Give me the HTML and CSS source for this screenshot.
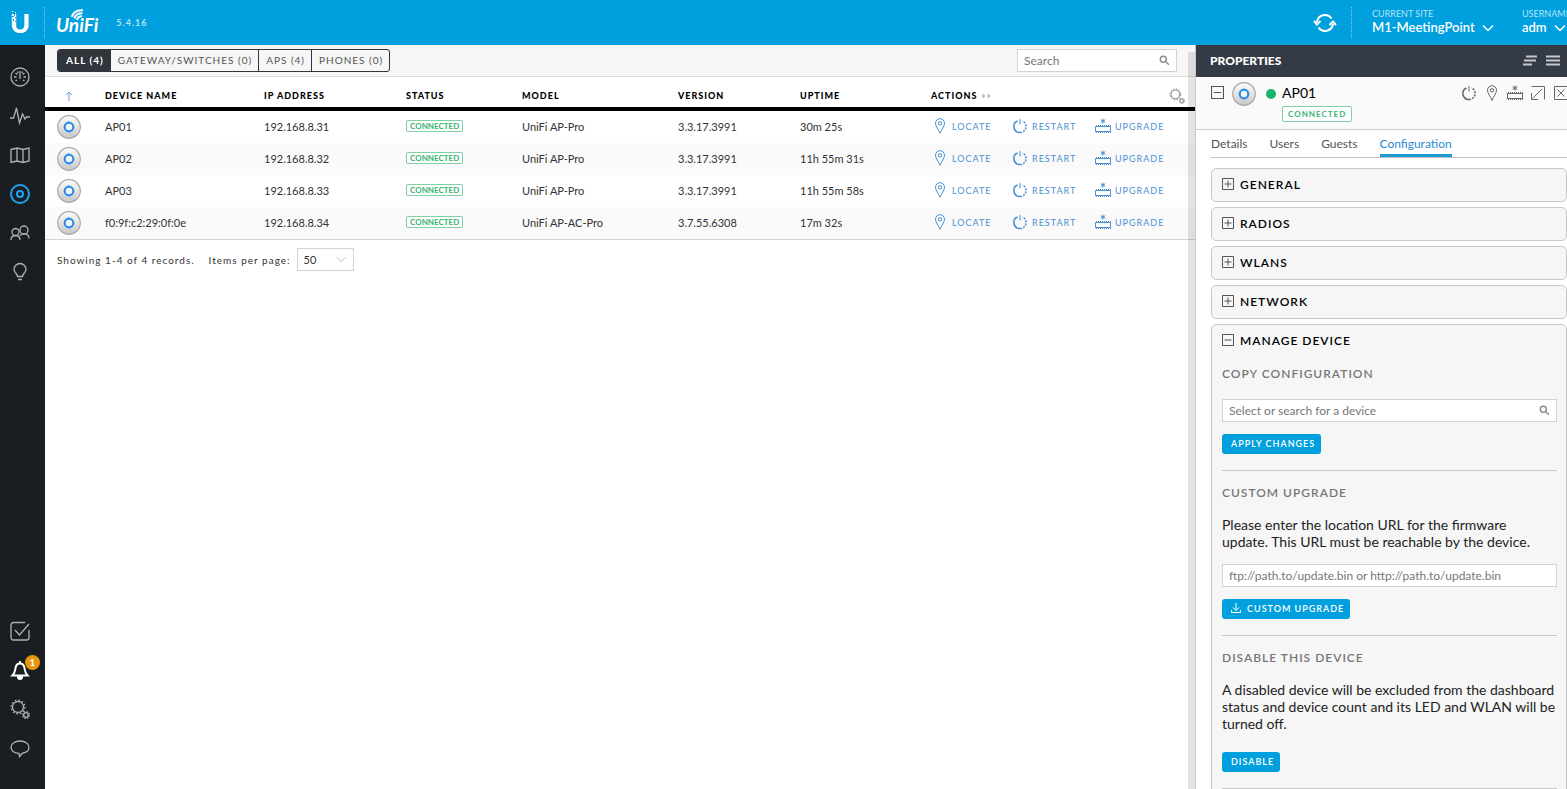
FILE: index.html
```html
<!DOCTYPE html>
<html lang="en">
<head>
    <meta charset="UTF-8">
    <meta name="viewport" content="width=device-width, initial-scale=1.0">
    <title>UniFi - Devices</title>
    <link rel="stylesheet" href="styles.css">
</head>
<body>
    <!-- icon sprite -->
    <svg class="sprite" aria-hidden="true">
        <linearGradient id="ap-shade" x1="0" y1="0" x2="0" y2="1">
            <stop offset="0" stop-color="#fdfdfd"/>
            <stop offset="1" stop-color="#c6c6c6"/>
        </linearGradient>
        <symbol id="i-ap" viewBox="0 0 24 24">
            <circle cx="12" cy="12" r="11.3" fill="url(#ap-shade)" stroke="#a9a9a9" stroke-width="1.2"/>
            <circle cx="12" cy="12" r="4.3" fill="#f4f4f4" stroke="#2b90e6" stroke-width="2.2"/>
        </symbol>
        <symbol id="i-pin" viewBox="0 0 16 16">
            <path d="M8 15.3C6.500 11.500 3.500 8.500 3.500 5.200a4.500 4.500 0 0 1 9 0C12.500 8.500 9.500 11.500 8 15.300z"/>
            <circle cx="8" cy="5.300" r="1.700"/>
        </symbol>
        <symbol id="i-restart" viewBox="0 0 16 16">
            <path d="M8 1v5.500"/>
            <path d="M5.500 3A6 6 0 0 0 8 14.500" stroke-width="1.500"/>
            <path d="M8 14.500A6 6 0 0 0 10.500 3" stroke-width="1.500" stroke-dasharray="2 1.200"/>
        </symbol>
        <symbol id="i-upgrade" viewBox="0 0 16 16">
            <path d="M8 .5v5M5.700 1.700l4.600 2.800M10.300 1.700L5.700 4.500"/>
            <path d="M.5 8.500h15v5H.5z"/>
            <path d="M1 14.500h15M1 7.500h15" stroke-dasharray="1 1"/>
        </symbol>
        <symbol id="i-gears" viewBox="0 0 20 20">
            <circle cx="8" cy="8" r="5.500"/>
            <circle cx="8" cy="8" r="6.800" stroke-dasharray="1.700 1.860"/>
            <circle cx="16" cy="16" r="2.300"/>
            <circle cx="16" cy="16" r="3.400" stroke-dasharray="1.300 1.370"/>
        </symbol>
        <symbol id="i-search" viewBox="0 0 12 12">
            <circle cx="4.700" cy="4.700" r="3.300"/>
            <path d="M7.200 7.200l3.600 3.400"/>
        </symbol>
        <symbol id="i-down" viewBox="0 0 12 8">
            <path d="M1 1.500l5 5 5-5"/>
        </symbol>
        <symbol id="i-plus" viewBox="0 0 12 12">
            <path d="M.5.5h11v11H.5zM2.500 6h7M6 2.500v7"/>
        </symbol>
        <symbol id="i-minus" viewBox="0 0 12 12">
            <path d="M.5.5h11v11H.5zM2.500 6h7"/>
        </symbol>
    </svg>

    <header class="topbar">
        <a class="brand" href="#" aria-label="Ubiquiti">
            <svg class="brand-mark" width="24" height="26" viewBox="0 0 24 26">
                <text class="brand-letter" x="0" y="23">U</text>
                <g fill="#00a0df">
                    <rect x="4" y="3" width="1" height="3"/>
                    <rect x="2" y="6" width="2" height="1"/>
                    <rect x="5" y="7" width="2" height="1"/>
                    <rect x="3" y="9" width="1" height="2"/>
                    <rect x="5" y="11" width="1" height="1"/>
                </g>
                <g fill="#fff">
                    <rect x="2" y="1" width="1" height="1"/>
                    <rect x="5" y="2" width="1" height="1"/>
                </g>
            </svg>
        </a>
        <a class="logo" href="#">
            <svg class="logo-waves" width="16" height="12" viewBox="0 0 16 12">
                <path d="M1 8C2 3 6 .8 12 1.200M3.500 9.500C4.500 5.500 7 4.200 11.500 4.300M6 11c.6-2.600 2-3.700 5-3.700"/>
            </svg>
            <span class="logo-text">UniFi</span>
        </a>
        <span class="version">5.4.16</span>
        <button class="icon-btn refresh" aria-label="Refresh">
            <svg width="24" height="20" viewBox="0 0 24 20">
                <path d="M4 9a8 8 0 0 1 14.500-3.500M20 11a8 8 0 0 1-14.500 3.500"/>
                <path d="M1 8l3 3.500L7.500 8M16.500 12L20 8.500l3 3.500"/>
            </svg>
        </button>
        <button class="picker site">
            <span class="picker-label">CURRENT SITE</span>
            <span class="picker-value">M1-MeetingPoint <svg class="chevron"><use href="#i-down"/></svg></span>
        </button>
        <button class="picker user">
            <span class="picker-label">USERNAME</span>
            <span class="picker-value">adm <svg class="chevron"><use href="#i-down"/></svg></span>
        </button>
    </header>

    <div class="layout">
        <nav class="sidebar">
            <a href="#" aria-label="Dashboard"><svg viewBox="0 0 20 20"><circle cx="10" cy="10" r="9"/><path d="M10 4v8M4 10h2.500M13.500 10H16M5.500 6l1.800 1.400M14.500 6l-1.800 1.400M5.500 14l1.500-1M14.500 14L13 13M7.500 4.500l.6 1.500M12.500 4.500L12 6"/></svg></a>
            <a href="#" aria-label="Statistics"><svg viewBox="0 0 20 20"><path d="M0 12h3.500L6.500 2l3 15L12.500 8l2.500 5 1.500-2H20"/></svg></a>
            <a href="#" aria-label="Map"><svg viewBox="0 0 20 20"><path d="M1 4.500L7 3l6 1.500L19 3v13l-6 1.500L7 16l-6 1.500zM7 3v13M13 4.500v13"/></svg></a>
            <a href="#" class="active" aria-label="Devices"><svg viewBox="0 0 20 20"><circle cx="10" cy="10" r="9"/><circle cx="10" cy="10" r="3"/></svg></a>
            <a href="#" aria-label="Clients"><svg viewBox="0 0 20 20"><circle cx="5.500" cy="9" r="3.500"/><circle cx="14" cy="7" r="4"/><path d="M1 17c0-3 2-4.500 4.500-4.500S10 14 10 17M10 12.500c1-1.300 2.400-1.600 4-1.600 3 0 5 1.600 5 4.600"/></svg></a>
            <a href="#" aria-label="Insights"><svg viewBox="0 0 20 20"><path d="M7.500 14.500c0-3-3.500-4-3.500-7a6 6 0 0 1 12 0c0 3-3.500 4-3.500 7zM8 17.500h4"/></svg></a>
            <a href="#" class="push" aria-label="Tasks"><svg viewBox="0 0 20 20"><path d="M15 1.500H3.500a2.500 2.500 0 0 0-2.500 2.500v12.500A2.500 2.500 0 0 0 3.500 19h13a2.500 2.500 0 0 0 2.500-2.500V9M5 9l4.500 5L19 3"/></svg></a>
            <a href="#" class="alerts" aria-label="Alerts"><svg viewBox="0 0 20 20"><path d="M2.500 15.500C5 13 5 11 5.500 8c.5-3 2-4.500 4.500-4.500S14 5 14.500 8c.5 3 .5 5 3 7.500zM10 3.500V1"/><path d="M8 17h4a2 2 0 0 1-4 0z" fill="#fff"/></svg><span class="badge">1</span></a>
            <a href="#" aria-label="Settings"><svg viewBox="0 0 20 20"><use href="#i-gears"/></svg></a>
            <a href="#" aria-label="Chat"><svg viewBox="0 0 20 20"><path d="M9 15.300C4.300 15 1 12.500 1 9.200 1 5.700 5 3 10 3s9 2.700 9 6.200c0 3-2.700 5.300-6.500 6L9.500 18.500z"/></svg></a>
        </nav>

        <main class="content">
            <div class="toolbar">
                <div class="filters">
                    <button class="filter active">ALL (4)</button>
                    <button class="filter">GATEWAY/SWITCHES (0)</button>
                    <button class="filter">APS (4)</button>
                    <button class="filter">PHONES (0)</button>
                </div>
                <div class="field search">
                    <input type="text" placeholder="Search" aria-label="Search">
                    <svg class="search-icon"><use href="#i-search"/></svg>
                </div>
            </div>

            <table class="devices">
                <thead>
                    <tr>
                        <th class="col-icon"><svg class="sort" viewBox="0 0 8 10"><path d="M4 10V1M1 4l3-3 3 3"/></svg></th>
                        <th class="col-name">DEVICE NAME</th>
                        <th class="col-ip">IP ADDRESS</th>
                        <th class="col-status">STATUS</th>
                        <th class="col-model">MODEL</th>
                        <th class="col-version">VERSION</th>
                        <th class="col-uptime">UPTIME</th>
                        <th>
                            <div class="actions-head">ACTIONS
                                <svg class="resize" viewBox="0 0 10 6"><path d="M3 1L1 3l2 2M7 1l2 2-2 2M1 3h3M6 3h3"/></svg>
                                <button class="icon-btn columns" aria-label="Customize columns"><svg class="line-icon"><use href="#i-gears"/></svg></button>
                            </div>
                        </th>
                    </tr>
                </thead>
                <tbody>
                    <tr>
                        <td class="icon-cell"><svg class="ap"><use href="#i-ap"/></svg></td>
                        <td>AP01</td>
                        <td>192.168.8.31</td>
                        <td><span class="status">CONNECTED</span></td>
                        <td>UniFi AP-Pro</td>
                        <td>3.3.17.3991</td>
                        <td>30m 25s</td>
                        <td><div class="actions">
                            <button class="action locate"><svg><use href="#i-pin"/></svg>LOCATE</button>
                            <button class="action restart"><svg><use href="#i-restart"/></svg>RESTART</button>
                            <button class="action"><svg><use href="#i-upgrade"/></svg>UPGRADE</button>
                        </div></td>
                    </tr>
                    <tr>
                        <td class="icon-cell"><svg class="ap"><use href="#i-ap"/></svg></td>
                        <td>AP02</td>
                        <td>192.168.8.32</td>
                        <td><span class="status">CONNECTED</span></td>
                        <td>UniFi AP-Pro</td>
                        <td>3.3.17.3991</td>
                        <td>11h 55m 31s</td>
                        <td><div class="actions">
                            <button class="action locate"><svg><use href="#i-pin"/></svg>LOCATE</button>
                            <button class="action restart"><svg><use href="#i-restart"/></svg>RESTART</button>
                            <button class="action"><svg><use href="#i-upgrade"/></svg>UPGRADE</button>
                        </div></td>
                    </tr>
                    <tr>
                        <td class="icon-cell"><svg class="ap"><use href="#i-ap"/></svg></td>
                        <td>AP03</td>
                        <td>192.168.8.33</td>
                        <td><span class="status">CONNECTED</span></td>
                        <td>UniFi AP-Pro</td>
                        <td>3.3.17.3991</td>
                        <td>11h 55m 58s</td>
                        <td><div class="actions">
                            <button class="action locate"><svg><use href="#i-pin"/></svg>LOCATE</button>
                            <button class="action restart"><svg><use href="#i-restart"/></svg>RESTART</button>
                            <button class="action"><svg><use href="#i-upgrade"/></svg>UPGRADE</button>
                        </div></td>
                    </tr>
                    <tr>
                        <td class="icon-cell"><svg class="ap"><use href="#i-ap"/></svg></td>
                        <td>f0:9f:c2:29:0f:0e</td>
                        <td>192.168.8.34</td>
                        <td><span class="status">CONNECTED</span></td>
                        <td>UniFi AP-AC-Pro</td>
                        <td>3.7.55.6308</td>
                        <td>17m 32s</td>
                        <td><div class="actions">
                            <button class="action locate"><svg><use href="#i-pin"/></svg>LOCATE</button>
                            <button class="action restart"><svg><use href="#i-restart"/></svg>RESTART</button>
                            <button class="action"><svg><use href="#i-upgrade"/></svg>UPGRADE</button>
                        </div></td>
                    </tr>
                </tbody>
            </table>

            <div class="pager">
                <span>Showing 1-4 of 4 records.</span>
                <label for="per-page">Items per page:</label>
                <div class="select">
                    <select id="per-page">
                        <option>50</option>
                        <option>100</option>
                    </select>
                    <svg class="select-arrow"><use href="#i-down"/></svg>
                </div>
            </div>
        </main>

        <aside class="panel">
            <div class="panel-title">
                <h2>PROPERTIES</h2>
                <button class="icon-btn" aria-label="Collapse all"><svg width="16" height="12" viewBox="0 0 16 12"><path d="M4 1.500h11M2 5.500h12M1 9.500h9"/></svg></button>
                <button class="icon-btn" aria-label="Menu"><svg width="16" height="12" viewBox="0 0 16 12"><path d="M1 1.500h14M1 5.500h14M1 9.500h14"/></svg></button>
            </div>

            <div class="device">
                <button class="icon-btn collapse" aria-label="Collapse"><svg class="line-icon box"><use href="#i-minus"/></svg></button>
                <svg class="ap"><use href="#i-ap"/></svg>
                <div class="device-info">
                    <h3 class="device-name">AP01</h3>
                    <span class="status large">CONNECTED</span>
                </div>
                <div class="device-tools">
                    <button class="icon-btn" aria-label="Restart"><svg class="line-icon"><use href="#i-restart"/></svg></button>
                    <button class="icon-btn" aria-label="Locate"><svg class="line-icon"><use href="#i-pin"/></svg></button>
                    <button class="icon-btn" aria-label="Upgrade"><svg class="line-icon"><use href="#i-upgrade"/></svg></button>
                    <button class="icon-btn" aria-label="Detach"><svg class="line-icon" viewBox="0 0 16 16"><path d="M1.500 1.500h13v13M12 4l-9.500 9.500M1.500 8v6.500H8"/></svg></button>
                    <button class="icon-btn" aria-label="Close"><svg class="line-icon" viewBox="0 0 16 16"><path d="M1.500 1.500h13v13h-13zM4.500 4.500l7 7M11.500 4.500l-7 7"/></svg></button>
                </div>
            </div>

            <nav class="tabs">
                <a href="#">Details</a>
                <a href="#">Users</a>
                <a href="#">Guests</a>
                <a href="#" class="active">Configuration</a>
            </nav>

            <div class="sections">
                <section class="section"><button class="section-head"><svg class="box"><use href="#i-plus"/></svg>GENERAL</button></section>
                <section class="section"><button class="section-head"><svg class="box"><use href="#i-plus"/></svg>RADIOS</button></section>
                <section class="section"><button class="section-head"><svg class="box"><use href="#i-plus"/></svg>WLANS</button></section>
                <section class="section"><button class="section-head"><svg class="box"><use href="#i-plus"/></svg>NETWORK</button></section>
                <section class="section">
                    <button class="section-head"><svg class="box"><use href="#i-minus"/></svg>MANAGE DEVICE</button>
                    <div class="group copy">
                        <h4>COPY CONFIGURATION</h4>
                        <div class="field">
                            <input type="text" placeholder="Select or search for a device" aria-label="Select or search for a device">
                            <svg class="search-icon"><use href="#i-search"/></svg>
                        </div>
                        <button class="btn">APPLY CHANGES</button>
                    </div>
                    <div class="group">
                        <h4>CUSTOM UPGRADE</h4>
                        <p>Please enter the location URL for the firmware<br>update. This URL must be reachable by the device.</p>
                        <div class="field">
                            <input type="text" placeholder="ftp://path.to/update.bin or http://path.to/update.bin" aria-label="Firmware URL">
                        </div>
                        <button class="btn"><svg viewBox="0 0 10 10"><path d="M5 0v7M2 4.500l3 3 3-3M.5 7v2.500h9V7"/></svg>CUSTOM UPGRADE</button>
                    </div>
                    <div class="group disable">
                        <h4>DISABLE THIS DEVICE</h4>
                        <p>A disabled device will be excluded from the dashboard status and device count and its LED and WLAN will be turned off.</p>
                        <button class="btn">DISABLE</button>
                    </div>
                    <div class="group"></div>
                </section>
            </div>
        </aside>
    </div>
</body>
</html>
```
FILE: styles.css
```css
* {
    box-sizing: border-box;
    margin: 0;
    padding: 0;
}

body {
    display: flex;
    flex-direction: column;
    height: 100vh;
    overflow: hidden;
    font-family: Lato, "Open Sans", sans-serif;
    font-size: 11px;
    color: #333;
    background-color: #fff;
}

button,
input,
select {
    font-family: inherit;
    color: inherit;
    border: none;
    background: none;
}

button {
    cursor: pointer;
}

a {
    color: inherit;
    text-decoration: none;
}

svg {
    display: block;
    flex-shrink: 0;
    fill: none;
    stroke: currentColor;
}

.sprite {
    position: absolute;
    width: 0;
    height: 0;
}

.icon-btn {
    display: flex;
}

/* top bar */
.topbar {
    display: flex;
    align-items: center;
    flex: 0 0 45px;
    color: #fff;
    background-color: #00a0df;
    overflow: hidden;
    white-space: nowrap;
}

.brand {
    display: flex;
    align-items: center;
    width: 45px;
    height: 31px;
    padding-left: 10px;
    border-right: 1px dotted #7fd0ef;
}

.brand-mark {
    stroke: none;
}

.brand-letter {
    font-size: 27px;
    font-weight: 900;
    fill: #fff;
}

.logo {
    position: relative;
    padding: 4px 0 0 11px;
}

.logo-waves {
    position: absolute;
    top: -2px;
    left: 26px;
    stroke-width: 2;
}

.logo-text {
    display: block;
    font-size: 19px;
    font-weight: 700;
    font-style: italic;
    line-height: 20px;
}

.version {
    margin-left: 18px;
    font-size: 9px;
    font-weight: 700;
    letter-spacing: 1px;
    color: #b5e4f6;
}

.refresh {
    margin-left: auto;
    padding-right: 14px;
}

.refresh svg {
    stroke-width: 2;
}

.picker {
    height: 31px;
    padding-bottom: 4px;
    text-align: left;
}

.site {
    width: 171px;
    padding-left: 20px;
    border-left: 1px dotted #7fd0ef;
}

.user {
    width: 45px;
}

.picker-label {
    display: block;
    font-size: 9px;
    line-height: 13px;
    color: #b5e4f6;
}

.picker-value {
    display: flex;
    align-items: center;
    gap: 7px;
    font-size: 13px;
    font-weight: 600;
    line-height: 15px;
}

.chevron {
    width: 12px;
    height: 8px;
    stroke-width: 1.5;
}

.layout {
    display: flex;
    flex: 1;
    min-height: 0;
}

/* sidebar */
.sidebar {
    display: flex;
    flex-direction: column;
    width: 45px;
    padding: 13px 0 21px;
    color: #a9b4b2;
    background-color: #1a1d22;
}

.sidebar a {
    position: relative;
    height: 39px;
    padding: 9px 0 0 10px;
}

.sidebar svg {
    width: 20px;
    height: 20px;
    stroke-width: 1.3;
}

.sidebar .active {
    color: #1fa2f0;
}

.sidebar .active svg {
    stroke-width: 2;
}

.sidebar .push {
    margin-top: auto;
}

.sidebar .alerts {
    color: #fff;
}

.sidebar .alerts svg {
    stroke-width: 2;
}

.badge {
    position: absolute;
    top: 4px;
    left: 25px;
    width: 15px;
    height: 15px;
    border-radius: 50%;
    font-size: 10px;
    font-weight: 700;
    line-height: 14px;
    text-align: center;
    background-color: #ea960d;
}

/* device list */
.content {
    position: relative;
    flex: 1;
    min-width: 0;
}

/* scroll gutter */
.content::after {
    content: "";
    position: absolute;
    top: 7px;
    right: 0;
    bottom: 0;
    width: 7px;
    background-color: rgba(0, 0, 0, 0.11);
}

.toolbar {
    display: flex;
    justify-content: space-between;
    height: 32px;
    padding: 4px 18px 0 12px;
    background-color: #f6f6f6;
    border-bottom: 1px solid #ddd;
}

.filters {
    display: flex;
    height: 23px;
    border: 1px solid #2f353b;
    border-radius: 3px;
    overflow: hidden;
}

.filter {
    padding: 0 6px 2px 7px;
    font-size: 10px;
    letter-spacing: 1px;
    color: #555;
    border-left: 1px solid #2f353b;
}

.filter.active {
    padding-left: 8px;
    font-weight: 700;
    color: #fff;
    background-color: #2f353b;
    border-left: none;
}

.field {
    display: flex;
    align-items: center;
    height: 23px;
    padding: 0 6px;
    background-color: #fff;
    border: 1px solid #d2d2d2;
}

.field input {
    flex: 1;
    min-width: 0;
    font-size: 12px;
    outline: none;
}

.field input::placeholder {
    color: #777;
}

.search {
    width: 160px;
}

.search-icon {
    width: 11px;
    height: 11px;
    stroke: #888;
    stroke-width: 1.5;
}

.devices {
    width: 100%;
    table-layout: fixed;
    border-spacing: 0;
    border-bottom: 1px solid #d5d5d5;
}

.devices th {
    height: 34px;
    padding-top: 7px;
    font-size: 9px;
    font-weight: 900;
    letter-spacing: 1px;
    text-align: left;
    color: #000;
    border-bottom: 4px solid #000;
}

.devices td {
    height: 32px;
    padding-bottom: 2px;
}

.devices .icon-cell {
    padding-bottom: 0;
}

.devices tbody tr:nth-child(even) {
    background-color: #fafafa;
}

.col-icon {
    width: 60px;
}

.col-name {
    width: 159px;
}

.col-ip {
    width: 142px;
}

.col-status {
    width: 116px;
}

.col-model {
    width: 156px;
}

.col-version {
    width: 122px;
}

.col-uptime {
    width: 131px;
}

.sort {
    width: 8px;
    height: 10px;
    margin-left: 20px;
    stroke: #6f9be0;
}

.ap {
    width: 24px;
    height: 24px;
    stroke: none;
}

.devices .ap {
    margin-left: 12px;
}

.actions-head {
    display: flex;
    align-items: center;
    height: 14px;
}

.resize {
    width: 10px;
    height: 6px;
    margin-left: 4px;
    stroke: #aaa;
}

.columns {
    margin-left: auto;
    margin-right: 10px;
}

.status {
    display: block;
    width: fit-content;
    padding: 0 3px;
    font-size: 8px;
    font-weight: 700;
    line-height: 10px;
    color: #3bb273;
    background-color: #fff;
    border: 1px solid #7fd0a4;
    border-radius: 2px;
}

.status.large {
    padding: 0 5px;
    letter-spacing: 1px;
    line-height: 14px;
}

.actions {
    display: flex;
}

.action {
    display: flex;
    align-items: center;
    gap: 4px;
    padding-left: 1px;
    font-size: 9px;
    letter-spacing: 1px;
    color: #4a90d2;
}

.action svg {
    width: 16px;
    height: 16px;
}

.locate {
    width: 80px;
}

.restart {
    width: 83px;
}

.pager {
    display: flex;
    align-items: center;
    gap: 14px;
    padding: 8px 12px;
    font-size: 10px;
    letter-spacing: 1px;
}

.select {
    position: relative;
    margin-left: -8px;
}

.select select {
    width: 57px;
    height: 23px;
    padding-left: 6px;
    font-size: 11px;
    appearance: none;
    border: 1px solid #d2d2d2;
}

.select-arrow {
    position: absolute;
    top: 8px;
    right: 8px;
    width: 10px;
    height: 7px;
    stroke: #aaa;
    pointer-events: none;
}

/* properties panel */
.panel {
    width: 372px;
    overflow: hidden;
    border-left: 1px solid #c8c8c8;
}

.panel-title {
    display: flex;
    align-items: center;
    gap: 7px;
    height: 32px;
    padding: 0 6px 1px 14px;
    color: #fff;
    background-color: #343b46;
}

.panel-title h2 {
    margin-right: auto;
    font-size: 12px;
    font-weight: 900;
}

.panel-title svg {
    stroke: #c5c8cb;
    stroke-width: 2;
}

.line-icon {
    width: 16px;
    height: 16px;
    stroke: #666;
}

.device {
    display: flex;
    align-items: flex-start;
    height: 53px;
    padding: 5px 0 0 15px;
    background-color: #fafafa;
    border-bottom: 1px solid #ccc;
}

.box {
    width: 12px;
    height: 12px;
    stroke: #555;
}

.collapse {
    padding: 4px 8px 0 0;
}

.collapse .box {
    width: 13px;
    height: 13px;
}

.device-info {
    position: relative;
    padding-left: 26px;
}

/* online dot */
.device-info::before {
    content: "";
    position: absolute;
    top: 7px;
    left: 10px;
    width: 10px;
    height: 10px;
    border-radius: 50%;
    background-color: #18b56a;
}

.device-name {
    margin-bottom: 2px;
    font-size: 14px;
    font-weight: 400;
    line-height: 22px;
    color: #000;
}

.device-tools {
    display: flex;
    gap: 7px;
    margin: 3px -2px 0 auto;
}

.tabs {
    display: flex;
    gap: 22px;
    height: 28px;
    margin-left: 15px;
    font-size: 12px;
    line-height: 28px;
    color: #555;
    border-bottom: 1px solid #c0c0c0;
}

.tabs .active {
    height: 27px;
    color: #2a8bd6;
    border-bottom: 3px solid #1a9bd4;
}

.sections {
    display: flex;
    flex-direction: column;
    gap: 5px;
    padding: 10px 0 0 15px;
}

.section {
    background-color: #f6f6f6;
    border: 1px solid #c8c8c8;
    border-radius: 5px;
}

.section-head {
    display: flex;
    align-items: center;
    gap: 6px;
    width: 100%;
    height: 32px;
    padding: 0 0 2px 10px;
    font-size: 12px;
    font-weight: 600;
    letter-spacing: 1px;
    color: #000;
}

.group {
    margin: 0 9px 0 10px;
    padding: 13px 0 16px;
    border-top: 1px solid #c8c8c8;
}

.copy {
    padding-top: 8px;
    border-top: none;
}

.group h4 {
    margin-bottom: 14px;
    font-size: 12px;
    font-weight: 600;
    letter-spacing: 1px;
    line-height: 18px;
    color: #777;
}

.copy h4 {
    margin-bottom: 16px;
}

.group p {
    margin-bottom: 14px;
    font-size: 14px;
    line-height: 17px;
    color: #222;
}

.group .field {
    margin-bottom: 12px;
}

.disable p {
    margin-bottom: 20px;
}

.btn {
    display: flex;
    align-items: center;
    gap: 6px;
    height: 20px;
    padding: 0 6px 2px 9px;
    font-size: 9px;
    font-weight: 600;
    letter-spacing: 1px;
    color: #fff;
    background-color: #00a0df;
    border-radius: 3px;
}

.btn svg {
    width: 10px;
    height: 10px;
}
```
